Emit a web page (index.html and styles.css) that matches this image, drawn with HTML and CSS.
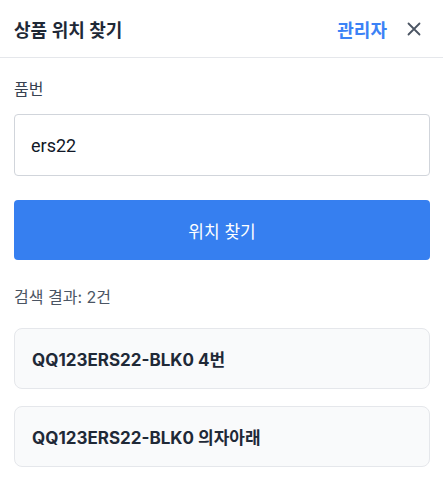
FILE: index.html
```html
<!DOCTYPE html>
<html lang="ko">
<head>
<meta charset="utf-8">
<title>상품 위치 찾기</title>
<link rel="stylesheet" href="styles.css">
</head>
<body>
<div class="panel">
  <header class="header">
    <h1 class="title">상품 위치 찾기</h1>
    <div class="actions">
      <a class="admin" href="#">관리자</a>
      <button class="close" aria-label="닫기">
        <svg width="14" height="14" viewBox="0 0 14 14"><path d="M1.5 1.5L12.5 12.5M12.5 1.5L1.5 12.5" stroke="#4b5563" stroke-width="1.8" stroke-linecap="round"/></svg>
      </button>
    </div>
  </header>
  <main class="body">
    <label class="label" for="code">품번</label>
    <input class="input" id="code" type="text" value="ers22">
    <button class="search">위치 찾기</button>
    <p class="count">검색 결과: 2건</p>
    <ul class="results">
      <li class="card">QQ123ERS22-BLK0 4번</li>
      <li class="card">QQ123ERS22-BLK0 의자아래</li>
    </ul>
  </main>
</div>
</body>
</html>
```

FILE: styles.css
```css
* { box-sizing: border-box; }
html, body { margin: 0; padding: 0; background: #fff; }
body {
  font-family: Inter, "Noto Sans CJK KR", sans-serif;
  color: #1f2937;
}
.panel { width: 443px; }
.header {
  height: 58px;
  display: flex;
  align-items: center;
  justify-content: space-between;
  padding: 0 14px;
  border-bottom: 1px solid #e5e7eb;
}
.title {
  margin: 0;
  font-size: 18px;
  font-weight: 600;
  color: #1f2937;
}
.actions { display: flex; align-items: center; gap: 20px; }
.admin {
  color: #3b82f6;
  font-size: 18px;
  font-weight: 600;
  text-decoration: none;
}
.close {
  border: 0;
  background: none;
  padding: 0;
  width: 14px;
  height: 14px;
  display: flex;
  margin-right: 8px;
}
.body {
  padding: 20px 13px 0 14px;
  display: flex;
  flex-direction: column;
}
.label {
  font-size: 16px;
  color: #374151;
  line-height: 22px;
}
.input {
  margin-top: 14px;
  height: 62px;
  width: 100%;
  border: 1px solid #d1d5db;
  border-radius: 4px;
  padding: 0 16px;
  font-family: Roboto, "Noto Sans CJK KR", sans-serif;
  font-size: 18px;
  color: #111827;
}
.search {
  margin-top: 24px;
  height: 60px;
  width: 100%;
  border: 0;
  border-radius: 4px;
  background: #367ff0;
  color: #fff;
  font-family: Inter, "Noto Sans CJK KR", sans-serif;
  font-size: 17px;
}
.count {
  margin: 26px 0 0;
  font-size: 16px;
  line-height: 22px;
  color: #4b5563;
}
.results {
  list-style: none;
  margin: 20px 0 0;
  padding: 0;
  display: flex;
  flex-direction: column;
  gap: 17px;
}
.card {
  height: 61px;
  display: flex;
  align-items: center;
  padding: 0 17px;
  background: #f9fafb;
  border: 1px solid #e5e7eb;
  border-radius: 8px;
  font-size: 17px;
  font-weight: 700;
  color: #1f2937;
}
```
